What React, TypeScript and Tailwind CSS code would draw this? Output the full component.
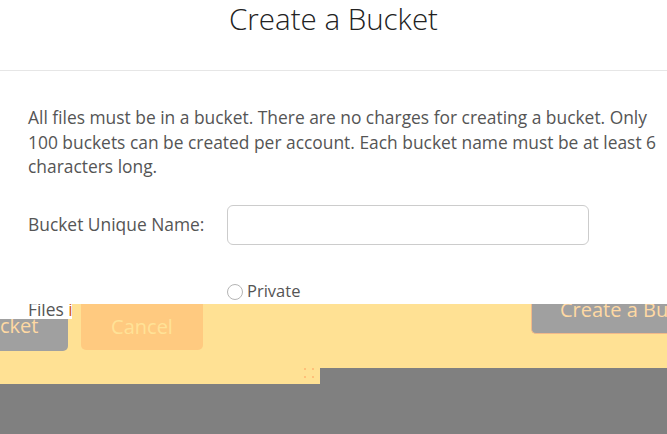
import React from "react";

const Header = () => (
  <div className="h-[71px] shrink-0 border-b border-[#e6e6e6] flex justify-center">
    <h1 className="text-[29.5px] font-light leading-[38px] text-[#222]">
      Create a Bucket
    </h1>
  </div>
);

const Body = () => (
  <div className="h-[233px] shrink-0 pl-[28px] flex flex-col">
    <p className="mt-[34px] w-[634px] text-[17.4px] leading-[24.5px] text-[#555]">
      All files must be in a bucket. There are no charges for creating a
      bucket. Only 100 buckets can be created per account. Each bucket name
      must be at least 6 characters long.
    </p>

    {/* Name field */}
    <div className="mt-[26px] flex items-center">
      <label className="w-[199px] text-[17.4px] text-[#555]">
        Bucket Unique Name:
      </label>
      <input
        type="text"
        className="w-[362px] h-[40px] rounded-[6px] border border-[#cccccc] bg-white outline-none"
      />
    </div>

    {/* Access option */}
    <div className="mt-[36px] ml-[199px] flex items-center gap-[4px] h-[22px]">
      <span className="w-[16px] h-[16px] rounded-full border border-[#b5b5b5] bg-white" />
      <span className="text-[16.5px] text-[#555]">Private</span>
    </div>
  </div>
);

const Footer = () => (
  <div className="flex-1 flex flex-col bg-[#808080]">
    <div className="h-[64px] shrink-0 bg-[#ffe194] flex items-start">
      <div className="w-[72px] flex flex-col">
        <div className="h-[15px] bg-white overflow-hidden whitespace-nowrap pl-[28px] text-[17.4px] leading-[22px] text-[#555]">
          <span className="block -mt-[6px]">
            Files <span className="text-[#d2601a]">in</span>
          </span>
        </div>
        <div className="w-[68px] h-[32px] bg-[#a0a0a0] rounded-br-[5px] overflow-hidden">
          <span className="block -mt-[5px] text-[20px] leading-[24px] text-[#ffd9a3]">
            cket
          </span>
        </div>
      </div>
      <button className="ml-[9px] w-[122px] h-[46px] rounded-b-[5px] bg-[#ffca80] text-[20px] text-[#ffe297] flex items-center justify-center">
        Cancel
      </button>
      <div className="flex-1" />
      <button className="w-[136px] h-[30px] rounded-bl-[5px] bg-[#a0a0a0] border-l border-b border-[#f2b98a] overflow-hidden text-left pl-[28px] whitespace-nowrap text-[20px] leading-[24px] text-[#ffd9a3] flex items-start">
        <span className="block -mt-[6px]">Create a Bu</span>
      </button>
    </div>
    <div className="h-[16px] shrink-0 flex">
      <div className="w-[320px] bg-[#ffe194] flex justify-end pr-[6px]">
        <div className="grid grid-cols-2 gap-x-[6px] gap-y-[6px] content-start">
          <span className="w-[2px] h-[2px] bg-[#ffc07a]" />
          <span className="w-[2px] h-[2px] bg-[#ffc07a]" />
          <span className="w-[2px] h-[2px] bg-[#ffc07a]" />
          <span className="w-[2px] h-[2px] bg-[#ffc07a]" />
        </div>
      </div>
      <div className="flex-1" />
    </div>
  </div>
);

export default function App() {
  return (
    <div className="w-[667px] h-[434px] overflow-hidden bg-white flex flex-col font-['Open_Sans',sans-serif]">
      <Header />
      <Body />
      <Footer />
    </div>
  );
}
